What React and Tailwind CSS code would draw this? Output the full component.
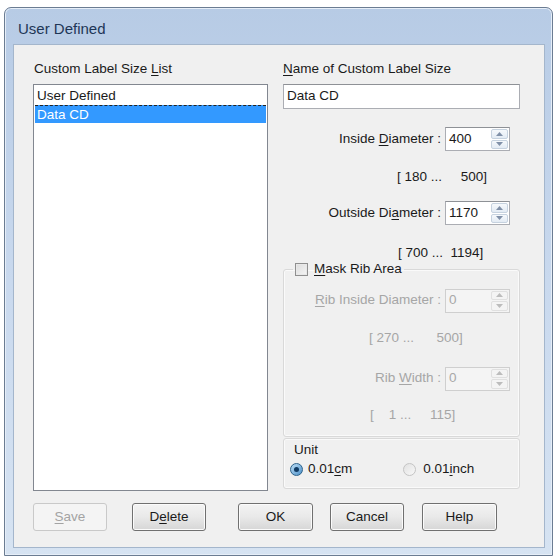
import React from "react";

const F = { fontFamily: '"Liberation Sans", Arial, sans-serif' };

function U({ children }) {
  return <span className="underline underline-offset-[2px]">{children}</span>;
}

function Spin({ value, disabled }) {
  return (
    <div
      className={`flex h-[24px] w-[65px] items-stretch border ${
        disabled ? "border-[#cfcfcf] bg-[#f4f4f4]" : "border-[#abadb3] border-t-[#8e9196] bg-white"
      }`}
    >
      <div className={`flex flex-1 items-center pl-[3px] text-[13.5px] ${disabled ? "text-[#a8a8a8]" : "text-[#1a1a1a]"}`}>
        {value}
      </div>
      <div className="flex w-[19px] flex-col gap-px p-px">
        {[0, 1].map((i) => (
          <div
            key={i}
            className={`flex flex-1 items-center justify-center rounded-[2px] border ${
              disabled ? "border-[#e0e0e0] bg-[#f4f4f4]" : "border-[#c6d2df] bg-gradient-to-b from-[#f6f9fc] to-[#e3ebf4]"
            }`}
          >
            <svg width="7" height="4" viewBox="0 0 7 4">
              <path d={i === 0 ? "M0 4 L3.5 0 L7 4 Z" : "M0 0 L3.5 4 L7 0 Z"} fill={disabled ? "#bcbcbc" : "#8090a8"} />
            </svg>
          </div>
        ))}
      </div>
    </div>
  );
}

function Btn({ children, disabled, className = "" }) {
  return (
    <div
      className={`flex h-[28px] w-[74px] items-center justify-center rounded-[3px] border text-[13.5px] ${
        disabled
          ? "border-[#c9c9c9] bg-[#f4f4f4] text-[#a3a3a3]"
          : "border-[#707070] bg-gradient-to-b from-[#f3f3f3] via-[#e9e9e9] to-[#d6d6d6] text-[#1a1a1a] shadow-[inset_0_0_0_1px_#fbfbfb]"
      } ${className}`}
    >
      {children}
    </div>
  );
}

export default function App() {
  return (
    <div className="h-[559px] w-[557px] bg-white pl-[4px] pt-[7px]" style={F}>
      <div className="flex h-[549px] w-[549px] flex-col rounded-t-[7px] border border-[#6b7c92] bg-gradient-to-b from-[#b7cbe5] via-[#c9d9ee] to-[#d6e3f2] shadow-[inset_0_0_0_1px_#e6eef8]">
        <div className="flex h-[36px] items-center pl-[13px] pt-[6px] text-[15px] text-[#1e3656]">User Defined</div>
        <div className="mb-[7px] ml-[8px] mr-[7px] flex flex-1 flex-col border border-[#a4b6cc] bg-[#f0f0f0] pl-[19px] pt-[16px] text-[13.5px] text-[#1a1a1a]">
          <div className="flex h-[430px]">
            {/* left column */}
            <div className="flex w-[235px] flex-col">
              <div className="h-[16px] leading-[16px] pl-[1px]">
                Custom Label Size <U>L</U>ist
              </div>
              <div className="mt-[7px] flex-1 border border-[#828790] bg-white p-px">
                <div className="h-[19px] pl-[2px] leading-[19px]">User Defined</div>
                <div className="h-[18px] border-t border-dashed border-[#222] bg-[#3399ff] pl-[2px] leading-[17px] text-white">
                  Data CD
                </div>
              </div>
            </div>
            {/* right column */}
            <div className="ml-[15px] flex w-[237px] flex-col">
              <div className="h-[16px] leading-[16px]">
                <U>N</U>ame of Custom Label Size
              </div>
              <div className="mt-[7px] flex h-[25px] items-center border border-[#abadb3] border-t-[#8e9196] bg-white pl-[3px]">
                Data CD
              </div>
              <div className="mt-[18px] flex h-[24px] items-center justify-end gap-[4px] pr-[10px]">
                <span>
                  Inside <U>D</U>iameter :
                </span>
                <Spin value="400" />
              </div>
              <div className="mt-[18px] h-[16px] whitespace-pre pl-[114px] leading-[16px]">{"[ 180 ...     500]"}</div>
              <div className="mt-[16px] flex h-[24px] items-center justify-end gap-[4px] pr-[10px]">
                <span>
                  Outside Di<U>a</U>meter :
                </span>
                <Spin value="1170" />
              </div>
              <div className="mt-[20px] h-[16px] whitespace-pre pl-[115px] leading-[16px]">{"[ 700 ...  1194]"}</div>

              <fieldset className="rounded-[3px] border border-[#d9d9d9] pb-[13px] shadow-[inset_0_0_0_1px_#fafafa]">
                <legend className="ml-[9px] flex h-[16px] items-center gap-[6px] px-[2px] leading-[16px]">
                  <span className="h-[13px] w-[13px] border border-[#8f8f8f] bg-gradient-to-br from-[#dcdcdc] to-[#f5f5f5] shadow-[inset_0_0_0_1px_#e8e8e8]" />
                  <span>
                    <U>M</U>ask Rib Area
                  </span>
                </legend>
                <div className="mt-[11px] flex h-[25px] items-center justify-end gap-[4px] pr-[9px] text-[#a6a6a6]">
                  <span>
                    <U>R</U>ib Inside Diameter :
                  </span>
                  <Spin value="0" disabled />
                </div>
                <div className="mt-[17px] h-[16px] whitespace-pre pl-[85px] leading-[16px] text-[#a6a6a6]">{"[ 270 ...      500]"}</div>
                <div className="mt-[20px] flex h-[25px] items-center justify-end gap-[4px] pr-[9px] text-[#a6a6a6]">
                  <span>
                    Rib <U>W</U>idth :
                  </span>
                  <Spin value="0" disabled />
                </div>
                <div className="mt-[16px] h-[16px] whitespace-pre pl-[86px] leading-[16px] text-[#a6a6a6]">{"[    1 ...     115]"}</div>
              </fieldset>

              <div className="mt-[1px] rounded-[3px] border border-[#d9d9d9] pb-[11px] pl-[6px] pt-[3px] shadow-[inset_0_0_0_1px_#fafafa]">
                <div className="h-[16px] pl-[4px] leading-[16px]">Unit</div>
                <div className="mt-[3px] flex h-[16px] items-center">
                  <span className="flex h-[13px] w-[13px] items-center justify-center rounded-full border border-[#2c628b] bg-gradient-to-br from-[#bfe0f7] to-[#4a90c8]">
                    <span className="h-[5px] w-[5px] rounded-full bg-[#0f3a63]" />
                  </span>
                  <span className="ml-[5px]">
                    0.01<U>c</U>m
                  </span>
                  <span className="ml-[51px] h-[13px] w-[13px] rounded-full border border-[#c4c4c4] bg-gradient-to-br from-[#e2e2e2] to-[#f8f8f8]" />
                  <span className="ml-[7px]">
                    0.01<U>i</U>nch
                  </span>
                </div>
              </div>
            </div>
          </div>
          <div className="mt-[12px] flex">
            <Btn disabled className="w-[73px]">
              <U>S</U>ave
            </Btn>
            <Btn className="ml-[25px]">
              D<U>e</U>lete
            </Btn>
            <Btn className="ml-[32px] w-[75px]">OK</Btn>
            <Btn className="ml-[17px]">Cancel</Btn>
            <Btn className="ml-[18px] w-[75px]">Help</Btn>
          </div>
        </div>
      </div>
    </div>
  );
}
